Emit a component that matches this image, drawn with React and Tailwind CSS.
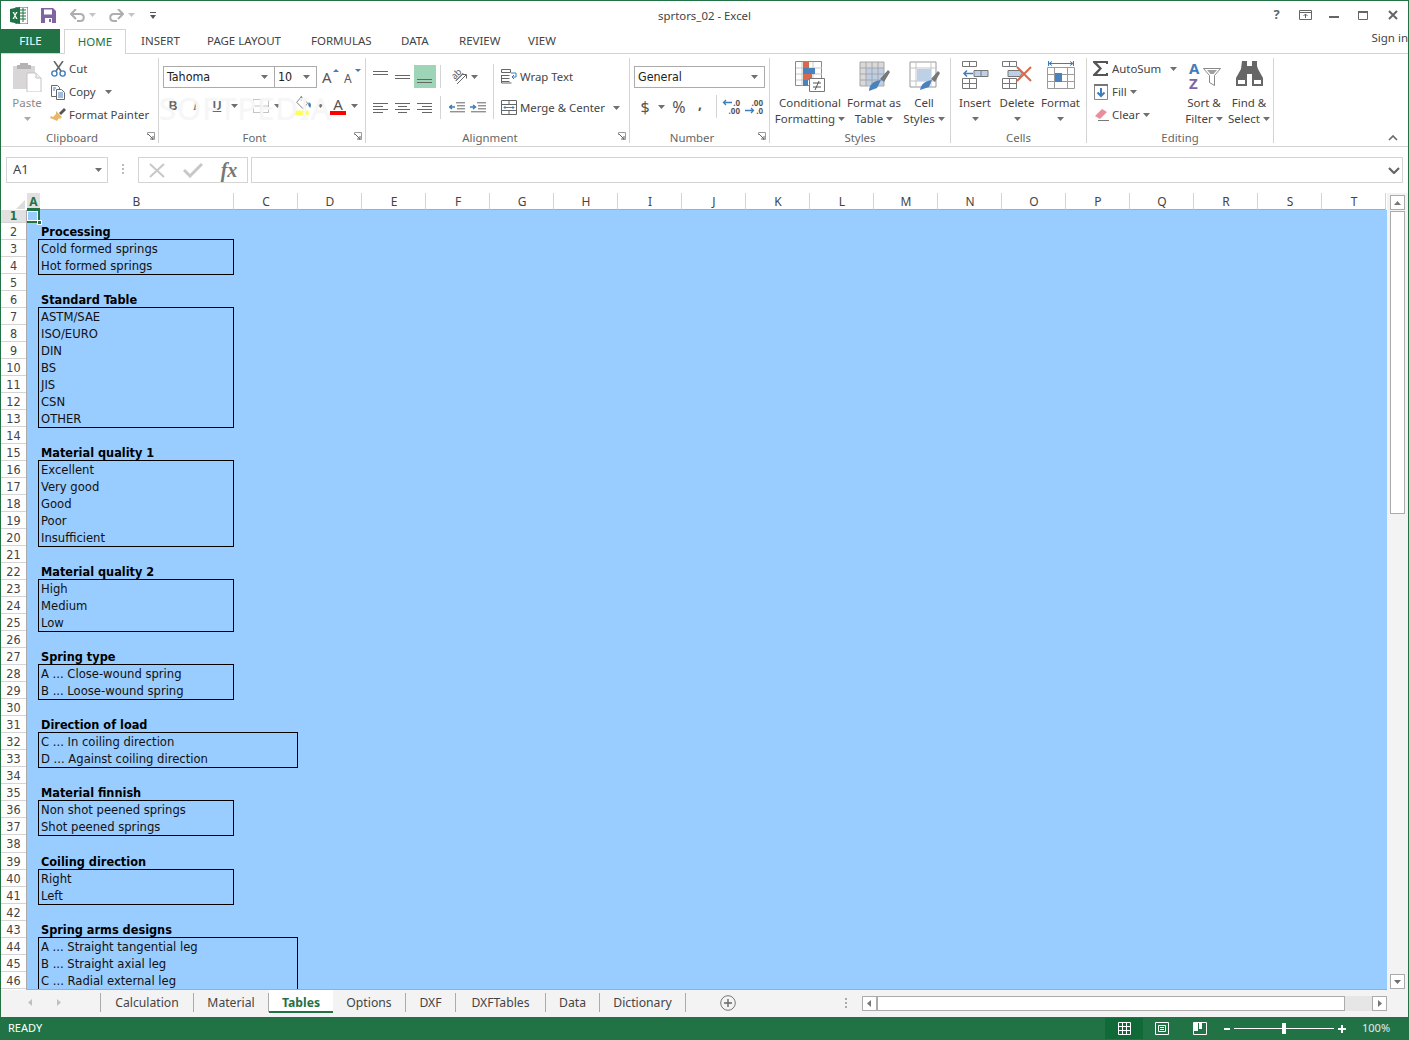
import React from "react";

const Caret = ({ c = "#6f6f6f" }) => (
  <svg width="7" height="4" viewBox="0 0 7 4" className="shrink-0"><path d="M0 0h7L3.5 4z" fill={c} /></svg>
);
const Slot = ({ w, children, cls = "" }) => (
  <div className={`flex items-center justify-center shrink-0 ${cls}`} style={{ width: w }}>{children}</div>
);
const Launcher = () => (
  <svg width="8" height="8" viewBox="0 0 8 8" className="absolute right-[3px] bottom-[3px]">
    <path d="M.5 3V.5H7.5V7.5H5" fill="none" stroke="#9a9a9a" /><path d="M1 2l5 5M3 7h3V4" fill="none" stroke="#666" />
  </svg>
);
const Group = ({ w, label, launcher, children }) => (
  <div className="relative flex flex-col shrink-0 h-[85px] mt-[4px] border-r border-[#d4d4d4]" style={{ width: w }}>
    <div className="flex flex-1 min-h-0">{children}</div>
    <div className={`h-[14px] -mb-[1px] pt-[1px] text-center leading-[14px] text-[11.4px] text-[#666] ${launcher ? "pr-[15px]" : ""}`}>{label}</div>
    {launcher && <Launcher />}
  </div>
);
const Big = ({ w, icon, l1, l2, caret = true }) => (
  <div className="flex flex-col items-center shrink-0 pt-[3px] text-[11.5px] leading-[16px] text-[#444] whitespace-nowrap" style={{ width: w }}>
    <div className="h-[34px] flex items-start justify-center">{icon}</div>
    <div>{l1}</div>
    <div className="flex items-center gap-[3px] h-[16px]">{l2}{caret && <Caret />}</div>
  </div>
);
const Small = ({ icon, label, caret, gap = 3 }) => (
  <div className="flex items-center h-[23px] text-[11.4px] text-[#444] whitespace-nowrap">
    <Slot w={22}>{icon}</Slot>
    <span>{label}</span>
    {caret && <span className="flex" style={{ marginLeft: gap }}><Caret /></span>}
  </div>
);
const Lines = ({ rows }) => (
  <svg width="16" height="14" viewBox="0 0 16 14">
    {rows.map(([x1, x2, y], i) => <path key={i} d={`M${x1} ${y}.5H${x2}`} stroke="#666" />)}
  </svg>
);

/* ribbon icons */
const PasteIcon = () => (
  <svg width="30" height="31" viewBox="0 0 30 31">
    <path d="M1 5h22v23H1z" fill="#d9d6d8" /><path d="M8 2h8v2h3v4H5V4h3z" fill="#b5b2b4" />
    <path d="M15 12h9l5 5v14H15z" fill="#fff" stroke="#c4c4c4" /><path d="M24 12v5h5" fill="#eee" stroke="#c4c4c4" />
  </svg>
);
const CutIcon = () => (
  <svg width="15" height="16" viewBox="0 0 15 16" fill="none">
    <path d="M3 0l7 10M12 0L5 10" stroke="#666" strokeWidth="1.6" />
    <circle cx="3.4" cy="12.5" r="2.6" stroke="#3f7dbb" strokeWidth="1.4" /><circle cx="11.6" cy="12.5" r="2.6" stroke="#3f7dbb" strokeWidth="1.4" />
  </svg>
);
const CopyIcon = () => (
  <svg width="16" height="16" viewBox="0 0 16 16" fill="#fff">
    <path d="M1.5 1.5h6l2 2v9h-8z" stroke="#666" /><path d="M6.5 5.5h5l3 3v7h-8z" stroke="#666" />
    <path d="M8 9h5M8 11h5M8 13h5M3 4h3M3 6h2" stroke="#3f7dbb" />
  </svg>
);
const BrushIcon = () => (
  <svg width="16" height="15" viewBox="0 0 16 15">
    <path d="M9 6l5-5 2 2-5 5z" fill="#555" /><path d="M6 4l6 6-2 2-1-1-2 3-2-1-5-2 1-2 2 1 3-3z" fill="#e8b668" />
  </svg>
);
const Fill = () => (
  <svg width="24" height="22" viewBox="0 0 24 22">
    <path d="M9 1l7 7-5 6-7-7z" fill="#fff" stroke="#777" /><path d="M9 0v5" stroke="#777" />
    <path d="M17 7c3 1 3 3 2 6-2-1-3-3-2-6z" fill="#3f7dbb" /><path d="M1 16h16v5H1z" fill="#ffff4d" />
  </svg>
);
const Borders = () => (
  <svg width="16" height="14" viewBox="0 0 16 14" stroke="#888" strokeDasharray="1 1" fill="none">
    <path d="M.5.5h15v13H.5zM8 .5v13M.5 7h15" />
  </svg>
);
const FontUp = ({ down }) => (
  <span className="relative inline-block w-[14px] h-[16px] text-[#555]">
    <span className={`absolute left-0 bottom-0 leading-none ${down ? "text-[12px]" : "text-[15px]"}`}>A</span>
    <svg width="6" height="3" viewBox="0 0 6 3" className="absolute right-[-3px] top-0"><path d={down ? "M0 0h6L3 3z" : "M0 3h6L3 0z"} fill="#3f7dbb" /></svg>
  </span>
);
const Orient = () => (
  <span className="relative inline-block w-[17px] h-[16px]">
    <span className="absolute left-[0px] top-[-1px] -rotate-45 text-[9px] leading-[12px] text-[#555] underline">ab</span>
    <svg width="17" height="16" viewBox="0 0 17 16" fill="none" className="absolute inset-0">
      <path d="M6 15L15 6M11.500 5.500h4V9.500" stroke="#666" />
    </svg>
  </span>
);
const Indent = ({ inc }) => (
  <svg width="16" height="11" viewBox="0 0 16 11" fill="none">
    <path d="M7 .5h9M8 3.500h8M8 6.500h8M1 9.500h15" stroke="#666" transform="translate(0 .3)" />
    <path d={inc ? "M0 5h5M3 3l2.500 2L3 7" : "M6 5H1M3 3L.5 5 3 7"} stroke="#3f7dbb" strokeWidth="1.5" />
  </svg>
);
const WrapIcon = () => (
  <svg width="17" height="15" viewBox="0 0 17 15" fill="none">
    <path d="M.5.500h9v3h-9zM.5 6.500h8M.5 9.500h8M.5 12.500h8" stroke="#666" /><path d="M.5 6v8h10" stroke="#666" />
    <path d="M10 4h5v4h-4M13 6l-2 2 2 2" stroke="#3f7dbb" />
  </svg>
);
const MergeIcon = () => (
  <svg width="16" height="15" viewBox="0 0 16 15" fill="none">
    <path d="M.5.500h15v14H.5zM.5 4.500h15M.5 10.500h15M8 .5v4M8 10.500v4" stroke="#666" />
    <path d="M3 7.500h10M4.500 6L3 7.500 4.500 9M11.500 6L13 7.500 11.500 9" stroke="#3f7dbb" />
  </svg>
);
const Dec = ({ inc }) => (
  <span className="relative inline-block w-[18px] h-[16px] text-[8px] leading-[8px] text-[#555] font-bold">
    <span className="absolute right-0 top-0">{inc ? ".00" : ".0"}</span>
    <span className="absolute right-0 top-[8px]">{inc ? ".0" : ".00"}</span>
    <svg width="10" height="7" viewBox="0 0 10 7" className={`absolute left-0 ${inc ? "top-[8px]" : "top-0"}`} fill="none">
      <path d={inc ? "M0 3.500h8M6 1l2.500 2.500L6 6" : "M10 3.500H2M4 1L1.500 3.500 4 6"} stroke="#3f7dbb" strokeWidth="1.3" />
    </svg>
  </span>
);
const CondIcon = () => (
  <svg width="30" height="31" viewBox="0 0 30 31">
    <path d="M.5.500h26v24H.5z" fill="#fff" stroke="#8a8a8a" />
    <path d="M7 1v24M18 1v24M1 7h26M1 13h26M1 19h26" stroke="#c8c8c8" />
    <path d="M8 1h6v6H8z" fill="#d9694a" /><path d="M8 7h12v6H8z" fill="#4a82bd" /><path d="M8 13h9v6H8z" fill="#d9694a" /><path d="M8 19h5v6H8z" fill="#4a82bd" />
    <path d="M14.500 17.500h15v13h-15z" fill="#fff" stroke="#777" />
    <path d="M18 22h8M18 26h8M24 20l-4 9" stroke="#555" fill="none" />
  </svg>
);
const TableIcon = () => (
  <svg width="31" height="31" viewBox="0 0 31 31">
    <path d="M1 1h24v24H1z" fill="#d9d9d9" /><path d="M7 7h18v17H7z" fill="#bdcfe4" />
    <path d="M1 1h24v24H1zM7 1v24M13 1v24M19 1v24M1 7h24M1 13h24M1 19h24" fill="none" stroke="#a6a6a6" />
    <path d="M21 18l8-9 2 2-6 10z" fill="#777" /><path d="M22 19l-4 8-8 3c0-6 4-10 12-11z" fill="#4a82bd" />
  </svg>
);
const CellStyle = () => (
  <svg width="31" height="31" viewBox="0 0 31 31">
    <path d="M1 1h26v25H1z" fill="#fff" stroke="#999" /><path d="M1 7h26M1 20h26M7 1v25M22 1v25" stroke="#c4c4c4" />
    <path d="M8 8h14v12H8z" fill="#bdd0e6" />
    <path d="M22 18l7-8 2 2-5 9z" fill="#777" /><path d="M23 19l-3 7-9 3c1-6 5-9 12-10z" fill="#4a82bd" />
  </svg>
);
const InsertIcon = () => (
  <svg width="27" height="28" viewBox="0 0 27 28" fill="none">
    <path d="M.5.500h14v5H.5zM7.500.5v5M.5 17.500h14v10H.5zM.5 22.500h14M7.500 17.500v10" stroke="#777" />
    <path d="M12 9.500h14v6H12zM19 9.500v6" fill="#bdd0e6" stroke="#777" /><path d="M11 12.500H2M5 9.500l-3 3 3 3" stroke="#3f7dbb" strokeWidth="1.5" />
  </svg>
);
const DeleteIcon = () => (
  <svg width="30" height="28" viewBox="0 0 30 28" fill="none">
    <path d="M.5.500h14v5H.5zM7.500.5v5M.5 17.500h14v10H.5zM.5 22.500h14M7.500 17.500v10" stroke="#777" />
    <path d="M6 9.500h12l2 3-2 3H6z" fill="#bdd0e6" stroke="#777" /><path d="M15 6l14 14M29 6L15 20" stroke="#d9694a" strokeWidth="2" />
  </svg>
);
const FormatIcon = () => (
  <svg width="28" height="30" viewBox="0 0 28 30" fill="none">
    <path d="M1.500 0v5M26.500 0v5M2 2.500h24M5 .5L2 2.500 5 4.500M23 .5l3 2-3 2" stroke="#3f7dbb" />
    <path d="M.5 6.500h27v21H.5zM7.500 6.500v21M20.500 6.500v21M.5 13.500h27M.5 20.500h27" stroke="#9a9a9a" />
    <path d="M8 12h7v9H8z" fill="#4a82bd" />
  </svg>
);
const SortIcon = () => (
  <span className="relative inline-block w-[32px] h-[30px] font-bold text-[15px] leading-[15px]">
    <span className="absolute left-[1px] top-0 text-[#3f7dbb]">A</span>
    <span className="absolute left-[1px] top-[15px] text-[#8064a2]">Z</span>
    <svg width="18" height="18" viewBox="0 0 18 18" className="absolute right-[-1px] top-[7px]"><path d="M.5.500h17l-6 7v10l-5-3v-7z" fill="#fff" stroke="#888" /><path d="M4 2h10l-3.500 4h-3z" fill="#a0a0a0" /></svg>
  </span>
);
const Binoculars = () => (
  <svg width="27" height="25" viewBox="0 0 27 25">
    <path d="M6 0h5v5h5V0h5v5l1 3 5 9v8h-11V13h-5v12H0v-8l5-9z" fill="#666" />
    <path d="M1.500 18.500h8v5h-8zM17.500 18.500h8v5h-8z" fill="#fff" stroke="#666" />
  </svg>
);
const Sigma = () => (
  <svg width="16" height="15" viewBox="0 0 16 15"><path d="M0 0h15v3h-2V2H4l5 5.500L4 13h9v-1h2v3H0v-1.500L6 7.500 0 1.500z" fill="#555" /></svg>
);

/* sheet */
const groups = [
  ["Processing", ["Cold formed springs", "Hot formed springs"]],
  ["Standard Table", ["ASTM/SAE", "ISO/EURO", "DIN", "BS", "JIS", "CSN", "OTHER"]],
  ["Material quality 1", ["Excellent", "Very good", "Good", "Poor", "Insufficient"]],
  ["Material quality 2", ["High", "Medium", "Low"]],
  ["Spring type", ["A ... Close-wound spring", "B ... Loose-wound spring"]],
  ["Direction of load", ["C ... In coiling direction", "D ... Against coiling direction"], true],
  ["Material finnish", ["Non shot peened springs", "Shot peened springs"], false, true],
  ["Coiling direction", ["Right", "Left"]],
  ["Spring arms designs", ["A ... Straight tangential leg", "B ... Straight axial leg", "C ... Radial external leg", ""], true],
];
const cols = "CDEFGHIJKLMNOPQRST".split("");
const rows = Array.from({ length: 46 }, (_, i) => i + 1);
const sheetFont = "font-['DejaVu_Sans_Condensed','DejaVu_Sans',sans-serif]";
const tabs = [["Calculation", 93], ["Material", 75], ["Tables", 64, true], ["Options", 73], ["DXF", 50], ["DXFTables", 90], ["Data", 54], ["Dictionary", 86]];
const ribbonTabs = [["INSERT", 66], ["PAGE LAYOUT", 104], ["FORMULAS", 90], ["DATA", 58], ["REVIEW", 69], ["VIEW", 40]];

const Combo = ({ w, text, cls = "" }) => (
  <div className={`flex items-center justify-between h-[22px] border border-[#ababab] bg-white pl-[3px] pr-[6px] text-[12.4px] text-[#222] ${sheetFont} ${cls}`} style={{ width: w }}>
    <span>{text}</span><Caret />
  </div>
);
const VSep = ({ cls = "" }) => <div className={`w-px bg-[#d4d4d4] shrink-0 ${cls}`} />;

export default function App() {
  return (
    <div className="relative flex flex-col w-[1409px] h-[1040px] overflow-hidden bg-white border-x border-t border-[#217346] font-['Noto_Sans',sans-serif] text-[#444]">
      {/* title bar */}
      <div className="grid grid-cols-[1fr_auto_1fr] items-center h-[28px] shrink-0">
        <div className="flex items-center">
          <svg width="18" height="17" viewBox="0 0 18 17" className="ml-[9px]">
            <path d="M6 0h12v17H6z" fill="#fff" stroke="#217346" /><path d="M10 3h6M10 6h6M10 9h6M10 12h6M13 1v14" stroke="#217346" />
            <path d="M0 2l10-2v17L0 15z" fill="#217346" /><path d="M2.500 5l2 3.500-2 3.500h1.600L5 9.700 6 12h1.600l-2-3.500 2-3.500H6L5 7.200 4.100 5z" fill="#fff" />
          </svg>
          <svg width="15" height="15" viewBox="0 0 15 15" className="ml-[13px]">
            <path d="M0 0h12l3 3v12H0z" fill="#8064a2" /><path d="M3 1.500h8v5H3z" fill="#fff" /><path d="M4 10h7v5H4z" fill="#fff" /><path d="M8 11h2v3H8z" fill="#8064a2" />
          </svg>
          <svg width="15" height="13" viewBox="0 0 15 13" fill="none" className="ml-[14px]">
            <path d="M2 5h8c5 0 5 7 0 7H7" stroke="#aeaeae" strokeWidth="2" /><path d="M6 0L1 5l5 5" stroke="#aeaeae" strokeWidth="2" />
          </svg>
          <span className="ml-[4px]"><Caret c="#c4c4c4" /></span>
          <svg width="15" height="13" viewBox="0 0 15 13" fill="none" className="ml-[13px]">
            <path d="M13 5H5c-5 0-5 7 0 7h3" stroke="#aeaeae" strokeWidth="2" /><path d="M9 0l5 5-5 5" stroke="#aeaeae" strokeWidth="2" />
          </svg>
          <span className="ml-[4px]"><Caret c="#c4c4c4" /></span>
          <svg width="6" height="7" viewBox="0 0 6 7" className="ml-[15px]"><path d="M0 0h6v1H0zM0 3h6L3 7z" fill="#555" /></svg>
        </div>
        <div className="text-[11.4px] text-[#444] pt-[2px]">sprtors_02 - Excel</div>
        <div className="flex items-center justify-end">
          <span className="w-[29px] text-center font-bold text-[13px] text-[#666]">?</span>
          <svg width="13" height="10" viewBox="0 0 13 10" fill="none" className="mx-[8px]"><path d="M.5.500h12v9H.5zM.5 2.500h12M6.500 8V4M4.500 6l2-2 2 2" stroke="#666" /></svg>
          <svg width="10" height="2" viewBox="0 0 10 2" className="mx-[9px] mt-[3px]"><path d="M0 0h10v2H0z" fill="#666" /></svg>
          <svg width="10" height="9" viewBox="0 0 10 9" fill="none" className="mx-[10px]"><path d="M.5 1h9v7.500h-9z" stroke="#666" /><path d="M0 1h10" stroke="#666" strokeWidth="2" /></svg>
          <svg width="10" height="10" viewBox="0 0 10 10" className="mx-[10px]"><path d="M1 1l8 8M9 1L1 9" stroke="#666" strokeWidth="2" /></svg>
        </div>
      </div>

      {/* tabs */}
      <div className="flex items-stretch h-[25px] shrink-0 border-b border-[#d4d4d4] text-[11.5px] leading-[24px] whitespace-nowrap">
        <div className="w-[59px] bg-[#217346] text-white text-center">FILE</div>
        <div className="ml-[4px] w-[62px] h-[25px] bg-white border-x border-t border-[#d4d4d4] text-center text-[#217346]">HOME</div>
        <div className="ml-[15px] flex">
          {ribbonTabs.map(([t, w]) => <span key={t} style={{ width: w }}>{t}</span>)}
        </div>
        <div className="ml-auto -mt-[3px] pl-[2px] overflow-hidden">Sign in</div>
      </div>

      {/* ribbon */}
      <div className="relative flex items-start h-[93px] shrink-0 border-b border-[#d4d4d4]">
        <Group w={158} label="Clipboard" launcher>
          <div className="flex flex-col items-center w-[34px] ml-[9px] pt-[3px] text-[11.5px] text-[#8a8a8a] leading-[16px]">
            <div className="h-[34px]"><PasteIcon /></div>
            <div>Paste</div>
            <div className="h-[16px] flex items-center"><Caret c="#aaa" /></div>
          </div>
          <div className="flex flex-col ml-[3px] -mt-[1px]">
            <Small icon={<CutIcon />} label="Cut" />
            <Small icon={<CopyIcon />} label="Copy" caret gap={9} />
            <Small icon={<BrushIcon />} label="Format Painter" />
          </div>
        </Group>

        <Group w={207} label="Font" launcher>
          <div className="flex flex-col pl-[4px] pt-[8px]">
            <div className="flex items-center">
              <Combo w={112} text="Tahoma" />
              <Combo w={43} text="10" cls="-ml-px" />
              <Slot w={22} cls="ml-[1px]"><FontUp /></Slot>
              <Slot w={22}><FontUp down /></Slot>
            </div>
            <div className="flex items-center h-[22px] mt-[7px] -ml-[1px] text-[#666]">
              <Slot w={22}><b className="text-[12px] font-['Liberation_Sans',sans-serif]">B</b></Slot>
              <Slot w={22}><i className="text-[12px] font-['Liberation_Serif',serif]">I</i></Slot>
              <Slot w={22}><b className="text-[12px] underline font-['Liberation_Sans',sans-serif]">U</b></Slot>
              <Slot w={12}><Caret /></Slot>
              <Slot w={22} cls="ml-[10px]"><Borders /></Slot>
              <Slot w={10}><Caret /></Slot>
              <Slot w={22} cls="ml-[11px]"><Fill /></Slot>
              <Slot w={10}><Caret /></Slot>
              <Slot w={22} cls="ml-[2px]">
                <span className="flex flex-col items-center leading-[14px] text-[15px] text-[#555]">A<span className="block w-[16px] h-[4px] bg-[#ff0000]" /></span>
              </Slot>
              <Slot w={10}><Caret /></Slot>
            </div>
          </div>
        </Group>

        <Group w={264} label="Alignment" launcher>
          <div className="flex flex-col w-[127px] pl-[4px] pt-[7px]">
            <div className="flex items-center h-[23px]">
              <Slot w={22}><Lines rows={[[0, 15, 1], [0, 15, 4]]} /></Slot>
              <Slot w={22}><Lines rows={[[0, 15, 5], [0, 15, 8]]} /></Slot>
              <Slot w={22} cls="h-[23px] bg-[#9fd5b7]"><Lines rows={[[0, 15, 9], [0, 15, 12]]} /></Slot>
              <VSep cls="h-[23px] ml-[4px]" />
              <Slot w={22} cls="ml-[7px]"><Orient /></Slot>
              <Slot w={8}><Caret /></Slot>
            </div>
            <div className="flex items-center h-[23px] mt-[8px]">
              <Slot w={22}><Lines rows={[[0, 15, 2], [0, 10, 5], [0, 15, 8], [0, 10, 11]]} /></Slot>
              <Slot w={22}><Lines rows={[[0, 15, 2], [3, 12, 5], [0, 15, 8], [3, 12, 11]]} /></Slot>
              <Slot w={22}><Lines rows={[[0, 15, 2], [5, 15, 5], [0, 15, 8], [5, 15, 11]]} /></Slot>
              <VSep cls="h-[23px] ml-[4px]" />
              <Slot w={22} cls="ml-[5px]"><Indent /></Slot>
              <Slot w={22} cls="-ml-[1px]"><Indent inc /></Slot>
            </div>
          </div>
          <VSep cls="h-[55px] mt-[6px]" />
          <div className="flex flex-col pl-[4px] pt-[3px]">
            <div className="h-[4px]" />
            <Small icon={<WrapIcon />} label="Wrap Text" />
            <div className="h-[8px]" />
            <Small icon={<MergeIcon />} label="Merge & Center" caret gap={8} />
          </div>
        </Group>

        <Group w={140} label="Number" launcher>
          <div className="flex flex-col pl-[4px] pt-[8px]">
            <Combo w={131} text="General" />
            <div className="flex items-center h-[23px] mt-[7px] text-[#555]">
              <Slot w={22}><span className="text-[16px]">$</span></Slot>
              <Slot w={10}><Caret /></Slot>
              <Slot w={22} cls="ml-[2px]"><span className="text-[16px]">%</span></Slot>
              <Slot w={20}><span className="text-[14px] font-bold leading-none -mt-[5px]">,</span></Slot>
              <VSep cls="h-[23px] ml-[6px]" />
              <Slot w={22} cls="ml-[3px]"><Dec /></Slot>
              <Slot w={22} cls="ml-[1px]"><Dec inc /></Slot>
            </div>
          </div>
        </Group>

        <Group w={181} label="Styles">
          <Big w={80} icon={<CondIcon />} l1="Conditional" l2="Formatting" />
          <Big w={48} icon={<TableIcon />} l1="Format as" l2="Table" />
          <Big w={52} icon={<CellStyle />} l1="Cell" l2="Styles" />
        </Group>

        <Group w={136} label="Cells">
          <Big w={48} icon={<InsertIcon />} l1="Insert" l2="" />
          <Big w={36} icon={<DeleteIcon />} l1="Delete" l2="" />
          <Big w={51} icon={<FormatIcon />} l1="Format" l2="" />
        </Group>

        <Group w={187} label="Editing">
          <div className="flex flex-col w-[99px] pl-[3px] -mt-[1px]">
            <Small icon={<Sigma />} label="AutoSum" caret gap={9} />
            <Small icon={
              <svg width="14" height="16" viewBox="0 0 14 16" fill="none"><path d="M.5.500h13v15H.5z" stroke="#888" /><path d="M0 1h14" stroke="#777" strokeWidth="2" /><path d="M7 4v8M3.500 8.500L7 12l3.500-3.500" stroke="#3f7dbb" strokeWidth="2" /></svg>
            } label="Fill" caret />
            <Small icon={
              <svg width="15" height="13" viewBox="0 0 15 13"><path d="M1 8l7-7 5 3-7 7z" fill="#ea8d9e" /><path d="M4 12.500h11" stroke="#777" /></svg>
            } label="Clear" caret />
          </div>
          <Big w={36} icon={<SortIcon />} l1="Sort &" l2="Filter" />
          <div className="w-[6px]" />
          <Big w={42} icon={<Binoculars />} l1="Find &" l2="Select" />
        </Group>

        <svg width="10" height="6" viewBox="0 0 10 6" fill="none" className="absolute left-[1387px] bottom-[5px]"><path d="M1 5l4-4 4 4" stroke="#666" strokeWidth="1.6" /></svg>
        {/* faint watermark over the Font group */}
        <div className="absolute left-[158px] top-[38px] text-[31px] leading-[32px] tracking-[1px] text-white/50 [text-shadow:0_0_1px_#eeeeee] pointer-events-none">SOFTPEDIA</div>
      </div>

      {/* formula bar */}
      <div className="flex items-start h-[46px] shrink-0 pt-[10px]">
        <div className="flex items-center justify-between ml-[5px] w-[102px] h-[26px] border border-[#d4d4d4] pl-[6px] pr-[5px] text-[13px] text-[#444]">A1<Caret /></div>
        <div className="flex flex-col gap-[2px] ml-[14px] mt-[7px] w-[3px]">
          <span className="h-[2px] w-[2px] bg-[#bbb]" /><span className="h-[2px] w-[2px] bg-[#bbb]" /><span className="h-[2px] w-[2px] bg-[#bbb]" />
        </div>
        <div className="flex items-center ml-[13px] w-[110px] h-[26px] border border-[#d4d4d4]">
          <Slot w={36}><svg width="16" height="15" viewBox="0 0 16 15"><path d="M1 1l14 13M15 1L1 14" stroke="#c8c8c8" strokeWidth="2" /></svg></Slot>
          <Slot w={36}><svg width="20" height="15" viewBox="0 0 20 15" fill="none"><path d="M1 7l6 6L19 1" stroke="#c8c8c8" strokeWidth="3" /></svg></Slot>
          <Slot w={36}><i className="font-['Liberation_Serif',serif] font-bold text-[20px] leading-none text-[#777]">fx</i></Slot>
        </div>
        <div className="flex items-center justify-end ml-[3px] w-[1152px] h-[26px] border border-[#d4d4d4] pr-[2px]">
          <svg width="12" height="7" viewBox="0 0 12 7" fill="none"><path d="M1 1l5 5 5-5" stroke="#666" strokeWidth="2.200" /></svg>
        </div>
      </div>

      {/* worksheet */}
      <div className="flex h-[797px] shrink-0">
        <div className="flex flex-col w-[1386px] shrink-0">
          <div className="flex h-[17px] shrink-0 text-[12px] leading-[17px] text-[#444] text-center">
            <div className="w-[26px] relative">
              <svg width="9" height="9" viewBox="0 0 9 9" className="absolute right-[2px] bottom-[1px]"><path d="M9 0v9H0z" fill="#dcdcdc" /></svg>
            </div>
            <div className="w-[13px] bg-[#e1e1e1] font-bold text-[#217346] border-b-2 border-[#217346]">A</div>
            <div className="w-[194px] border-r border-[#d4d4d4] border-b border-b-[#ababab]">B</div>
            {cols.map(c => <div key={c} className="w-[64px] pl-px border-r border-[#d4d4d4] border-b border-b-[#ababab]">{c}</div>)}
          </div>
          <div className="flex flex-1 min-h-0">
            <div className={`w-[26px] shrink-0 overflow-hidden border-r border-[#ababab] text-[12.5px] text-center text-[#444] ${sheetFont}`}>
              {rows.map(n => (
                <div key={n} className={n === 1
                  ? "h-[13px] text-[12px] leading-[12px] bg-[#e1e1e1] text-[#217346] font-bold border-b border-[#d4d4d4]"
                  : n === 38 ? "h-[18px] leading-[18px] border-b border-[#d4d4d4]" : "h-[17px] leading-[17px] border-b border-[#d4d4d4]"}>{n}</div>
              ))}
            </div>
            <div className={`relative flex-1 overflow-hidden bg-[#99ccff] border-b border-[#ababab] pt-[13px] text-[12.9px] leading-[18px] text-[#111] ${sheetFont}`}>
              {groups.map(([title, items, wide, extra]) => (
                <div key={title} className={extra ? "mb-[17px]" : "mb-[16px]"}>
                  <div className="h-[17px] pl-[14px] font-bold text-[12.6px] text-black">{title}</div>
                  <div className={`ml-[11px] -mt-px border border-black pl-[2px] ${wide ? "w-[260px]" : "w-[196px]"}`}>
                    {items.map((t, i) => <div key={i} className="h-[17px] whitespace-nowrap">{t}</div>)}
                  </div>
                </div>
              ))}
              {/* active cell A1 */}
              <div className="absolute left-[-2px] top-[-1px] w-[15px] h-[14px] border-2 border-[#217346] outline outline-1 -outline-offset-3 outline-white" />
              <div className="absolute left-[10px] top-[10px] w-[5px] h-[5px] bg-[#217346] border border-white" />
            </div>
          </div>
        </div>
        {/* vertical scrollbar */}
        <div className="flex flex-col items-center flex-1 bg-[#f3f3f3] pt-[2px] pb-[1px] px-[1px]">
          <div className="flex items-center justify-center w-[15px] h-[15px] bg-white border border-[#ababab]">
            <svg width="7" height="4" viewBox="0 0 7 4"><path d="M0 4h7L3.500 0z" fill="#777" /></svg>
          </div>
          <div className="w-[15px] h-[303px] mt-[1px] bg-white border border-[#ababab]" />
          <div className="flex-1" />
          <div className="flex items-center justify-center w-[15px] h-[15px] bg-white border border-[#ababab]"><Caret /></div>
        </div>
      </div>

      {/* sheet tabs */}
      <div className="flex items-start h-[27px] shrink-0 bg-[#f3f3f3] text-[12.2px] text-[#444] whitespace-nowrap">
        <div className="flex items-center justify-start w-[100px] h-[19px] pl-[27px] gap-[25px] border-r border-[#ababab] mt-[3px]">
          <svg width="4" height="7" viewBox="0 0 4 7"><path d="M4 0v7L0 3.500z" fill="#c0c0c0" /></svg>
          <svg width="4" height="7" viewBox="0 0 4 7"><path d="M0 0v7l4-3.500z" fill="#c0c0c0" /></svg>
        </div>
        {tabs.map(([t, w, on]) => on ? (
          <div key={t} style={{ width: w }} className="h-[24px] -mt-px bg-white border-b-2 border-[#217346] text-center font-bold text-[#217346] leading-[27px] shrink-0">{t}</div>
        ) : (
          <div key={t} style={{ width: w }} className="h-[19px] mt-[3px] border-r border-[#ababab] text-center leading-[19px] shrink-0">{t}</div>
        ))}
        <svg width="16" height="16" viewBox="0 0 16 16" fill="none" className="ml-[34px] mt-[5px] shrink-0"><circle cx="8" cy="8" r="7.300" stroke="#777" /><path d="M4 8h8M8 4v8" stroke="#666" strokeWidth="1.400" /></svg>
        <div className="flex flex-col gap-[2px] ml-[109px] mt-[8px] w-[2px] shrink-0">
          <span className="h-[2px] bg-[#aaa]" /><span className="h-[2px] bg-[#aaa]" /><span className="h-[2px] bg-[#aaa]" />
        </div>
        <div className="flex items-center ml-[15px] mt-[6px] h-[15px] w-[525px] shrink-0">
          <div className="flex items-center justify-center w-[15px] h-[15px] bg-white border border-[#ababab]"><svg width="4" height="7" viewBox="0 0 4 7"><path d="M4 0v7L0 3.500z" fill="#777" /></svg></div>
          <div className="w-[469px] h-[15px] bg-white border border-[#ababab]" />
          <div className="w-[27px] h-[15px] bg-[#e6e6e6]" />
          <div className="flex items-center justify-center w-[15px] h-[15px] bg-white border border-[#ababab]"><svg width="4" height="7" viewBox="0 0 4 7"><path d="M0 0v7l4-3.500z" fill="#777" /></svg></div>
        </div>
      </div>

      {/* status bar */}
      <div className="flex items-center h-[23px] shrink-0 bg-[#217346] text-white text-[11px] -mx-px">
        <span className="ml-[8px]">READY</span>
        <div className="ml-auto flex items-center h-[21px] w-[38px] justify-center bg-[#0f6a38]">
          <svg width="13" height="13" viewBox="0 0 13 13" fill="none" stroke="#fff"><path d="M.5.500h12v12H.5zM4.500.5v12M8.500.5v12M.5 4.500h12M.5 8.500h12" /></svg>
        </div>
        <svg width="14" height="13" viewBox="0 0 14 13" fill="none" stroke="#fff" className="ml-[12px]"><path d="M.5.500h13v12H.5zM3.500 3.500h7v6h-7zM5 5.500h4M5 7.500h4" /></svg>
        <svg width="14" height="13" viewBox="0 0 14 13" className="ml-[24px]"><path d="M.5.500h13v12H.5z" fill="none" stroke="#fff" /><path d="M1 1h4v8H1zM6 1h3v6H6z" fill="#fff" /></svg>
        <div className="w-[6px] h-[2px] bg-white ml-[17px]" />
        <div className="relative w-[100px] h-px bg-white ml-[4px]">
          <span className="absolute left-[48px] -top-[5px] w-[4px] h-[11px] bg-white" />
        </div>
        <svg width="8" height="8" viewBox="0 0 8 8" className="ml-[4px]"><path d="M3 0h2v3h3v2H5v3H3V5H0V3h3z" fill="#fff" /></svg>
        <span className="w-[63px] pl-[16px] text-[#e8e8e8]">100%</span>
      </div>
    </div>
  );
}
